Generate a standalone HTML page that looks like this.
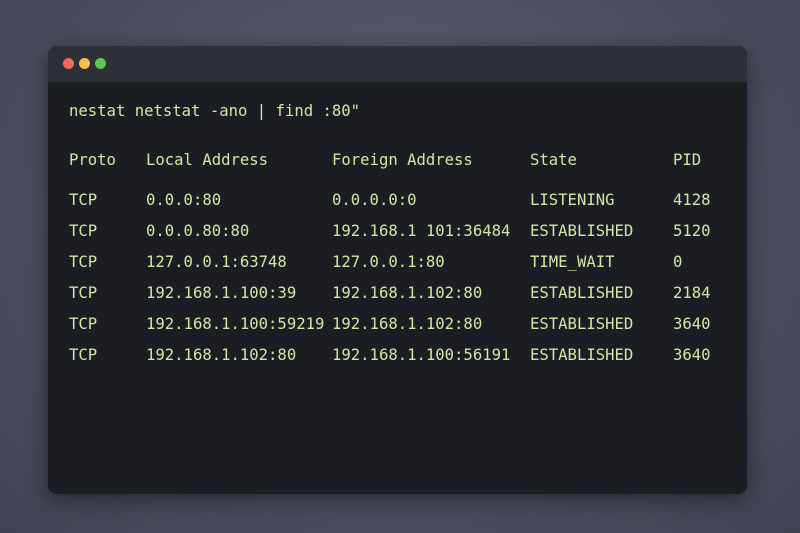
<!DOCTYPE html>
<html><head><style>
html,body{margin:0;padding:0;width:800px;height:533px;overflow:hidden;
background:radial-gradient(ellipse at 50% 40%,#5b5f6e 0%,#4b4f5e 60%,#3f4250 100%);}
.win{position:absolute;left:48px;top:46px;width:699px;height:448px;border-radius:9px;background:#1b1d22;overflow:hidden;box-shadow:0 6px 22px rgba(0,0,0,.45);}
.bar{position:absolute;left:0;top:0;width:100%;height:36px;background:#2e3037;}
.d{position:absolute;top:12px;width:11px;height:11px;border-radius:50%;}
.t{position:absolute;font-family:"DejaVu Sans Mono","Liberation Mono",monospace;font-size:15.6px;color:#d3e6a6;white-space:pre;line-height:18px;}
</style></head><body>
<div class="win">
<div class="bar"></div>
<div class="d" style="left:15px;background:#ec6a5f"></div>
<div class="d" style="left:31px;background:#f3bf4f"></div>
<div class="d" style="left:47px;background:#61c454"></div>
</div>
<div class="t" style="left:69px;top:102px">nestat netstat -ano | find :80"</div>
<div class="t" style="left:69px;top:151px">Proto</div>
<div class="t" style="left:146px;top:151px">Local Address</div>
<div class="t" style="left:332px;top:151px">Foreign Address</div>
<div class="t" style="left:530px;top:151px">State</div>
<div class="t" style="left:673px;top:151px">PID</div>

<div class="t" style="left:69px;top:191px">TCP</div><div class="t" style="left:146px;top:191px">0.0.0:80</div><div class="t" style="left:332px;top:191px">0.0.0.0:0</div><div class="t" style="left:530px;top:191px">LISTENING</div><div class="t" style="left:673px;top:191px">4128</div>
<div class="t" style="left:69px;top:222px">TCP</div><div class="t" style="left:146px;top:222px">0.0.0.80:80</div><div class="t" style="left:332px;top:222px">192.168.1 101:36484</div><div class="t" style="left:530px;top:222px">ESTABLISHED</div><div class="t" style="left:673px;top:222px">5120</div>
<div class="t" style="left:69px;top:253px">TCP</div><div class="t" style="left:146px;top:253px">127.0.0.1:63748</div><div class="t" style="left:332px;top:253px">127.0.0.1:80</div><div class="t" style="left:530px;top:253px">TIME_WAIT</div><div class="t" style="left:673px;top:253px">0</div>
<div class="t" style="left:69px;top:284px">TCP</div><div class="t" style="left:146px;top:284px">192.168.1.100:39</div><div class="t" style="left:332px;top:284px">192.168.1.102:80</div><div class="t" style="left:530px;top:284px">ESTABLISHED</div><div class="t" style="left:673px;top:284px">2184</div>
<div class="t" style="left:69px;top:315px">TCP</div><div class="t" style="left:146px;top:315px">192.168.1.100:59219</div><div class="t" style="left:332px;top:315px">192.168.1.102:80</div><div class="t" style="left:530px;top:315px">ESTABLISHED</div><div class="t" style="left:673px;top:315px">3640</div>
<div class="t" style="left:69px;top:346px">TCP</div><div class="t" style="left:146px;top:346px">192.168.1.102:80</div><div class="t" style="left:332px;top:346px">192.168.1.100:56191</div><div class="t" style="left:530px;top:346px">ESTABLISHED</div><div class="t" style="left:673px;top:346px">3640</div>
</body></html>
